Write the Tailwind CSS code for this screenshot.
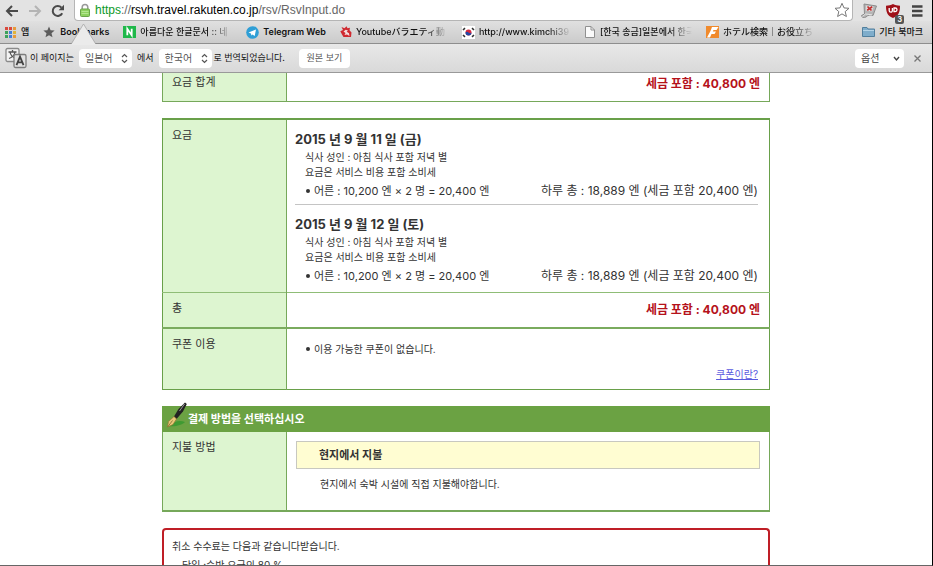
<!DOCTYPE html>
<html lang="ko">
<head>
<meta charset="utf-8">
<meta name="viewport" content="width=device-width, initial-scale=1">
<title>RsvInput</title>
<script src="https://cdn.jsdelivr.net/npm/@tailwindcss/browser@4"></script>
</head>
<body class="flex h-screen flex-col overflow-hidden border-r border-b border-r-black border-b-[#666] bg-white font-['Inter','Noto_Sans_CJK_KR',sans-serif] text-[#333]">

<header class="relative shrink-0">
  <!-- Address bar -->
  <div class="flex h-[21px] items-center bg-[#e3e3e3] pr-2 pl-[5px]">
    <button aria-label="뒤로" class="mr-[9px] shrink-0"><svg class="block" width="14" height="14" viewBox="0 0 14 14" fill="none" stroke="#4a4a4a" stroke-width="2"><path d="M13 7H2M7 2 2 7l5 5"/></svg></button>
    <button aria-label="앞으로" class="mr-[9px] shrink-0"><svg class="block" width="14" height="14" viewBox="0 0 14 14" fill="none" stroke="#b4b4b4" stroke-width="2"><path d="M1 7h11M7 2l5 5-5 5"/></svg></button>
    <button aria-label="새로고침" class="mr-[9px] shrink-0"><svg class="block" width="14" height="14" viewBox="0 0 14 14"><path d="M11.2 9.2A5 5 0 1 1 10.5 3.6" fill="none" stroke="#4a4a4a" stroke-width="2"/><path d="M13 .8v5.4H7.6z" fill="#4a4a4a"/></svg></button>
    <div class="flex h-[21px] min-w-0 flex-1 items-center rounded-b-sm border border-t-0 border-[#b5b5b5] bg-white px-1">
      <svg class="mr-1 shrink-0" width="12" height="14" viewBox="0 0 12 14"><path d="M3.200 7V4.200a2.800 2.800 0 0 1 5.600 0V7" fill="none" stroke="#999" stroke-width="1.500"/><rect x="1.500" y="6" width="9" height="7.500" rx="1" fill="#8ed25f" stroke="#6aa44a"/><path d="M2.500 8.500h7M2.500 10.500h7" stroke="#b4e691"/></svg>
      <div class="flex-1 truncate font-['Liberation_Sans',sans-serif] text-[12px] leading-5 text-[#666]"><span class="text-[#0b9a28]">https</span>://<span class="text-black">rsvh.travel.rakuten.co.jp</span>/rsv/RsvInput.do</div>
      <button aria-label="북마크 추가" class="-mr-[2px] shrink-0"><svg class="block" width="16" height="16" viewBox="0 0 16 16" fill="#fff" stroke="#777"><path d="m8 1.300 2 4.600 5 .4-3.800 3.300 1.200 4.900L8 11.900l-4.400 2.600 1.200-4.900L1 6.300l5-.4z"/></svg></button>
    </div>
    <button aria-label="스크립트 확장" class="ml-2 shrink-0"><svg class="block" width="16" height="18" viewBox="0 0 16 18"><path d="M3 2 15.500 4 12 13.500c-3-1-5-.5-7 1.500-2 1-4.500.5-4.500-1.500L3.500 12z" fill="#b5b5b5" stroke="#8c8c8c"/><path d="m1.500 14.500 3-2.500 6.500.8" stroke="#e5e5e5" fill="none"/><path d="m5 3.500 7.500 1-1.300 5-6.500-1z" fill="#ddd"/><path d="m6.500 4.500 4 4m.7-3.700-5 3.500" stroke="#c22d2d" stroke-width="1.700"/></svg></button>
    <button aria-label="차단 확장" class="relative ml-2 shrink-0"><svg class="block" width="18" height="20" viewBox="0 0 18 20"><path d="M8 3c2 1.300 4.500 1.700 7 1.700 0 6-1 9.800-7 12.300C2 14.500 1 10.700 1 4.700 3.500 4.700 6 4.300 8 3z" fill="#a01018"/><path d="M4.200 7v2.600a1.600 1.600 0 0 0 3.200 0V7M9 7v3.600h1.200a1.800 1.800 0 0 0 0-3.600z" fill="none" stroke="#fff" stroke-width="1.300"/></svg><span class="absolute -right-px bottom-[-3px] rounded-[2px] bg-[#555] px-[2px] text-[7px] leading-[9px] font-bold text-white">3</span></button>
    <button aria-label="메뉴" class="ml-[5px] shrink-0"><svg class="block" width="16" height="14" viewBox="0 0 16 14" stroke="#444" stroke-width="2.400"><path d="M4 2.500h10.500M4 7h10.500M4 11.500h10.500"/></svg></button>
  </div>

  <!-- Bookmarks bar -->
  <nav class="flex h-[23px] items-center gap-[14px] border-b border-[#8e8e8e] bg-linear-to-b from-[#e0e0e0] to-[#cbcbcb] pr-[9px] pl-[5px] text-[9px] font-medium whitespace-nowrap text-[#111]">
    <a href="#" class="flex items-center gap-[5px]"><svg width="11" height="11" viewBox="0 0 11 11"><path d="M0 0h3v3H0zM4 0h3v3H4z" fill="#d9493d"/><path d="M8 0h3v3H8zM8 8h3v3H8z" fill="#e89a3a"/><path d="M0 4h3v3H0zM0 8h3v3H0z" fill="#3da25c"/><path d="M4 4h3v3H4zM4 8h3v3H4z" fill="#4380d8"/><path d="M8 4h3v3H8z" fill="#e0b43b"/></svg>앱</a>
    <a href="#" class="flex items-center gap-[5px] font-semibold"><svg width="12" height="12" viewBox="0 0 12 12"><path d="m6 .5 1.600 3.800 4 .3-3.100 2.700 1 4L6 9.200l-3.500 2.100 1-4L.4 4.600l4-.3z" fill="#5c5c5c"/></svg>Bookmarks</a>
    <a href="#" class="flex items-center gap-1"><svg width="13" height="12" viewBox="0 0 13 12"><path d="M0 0h13v12H0z" fill="#1fb84a"/><path d="M4.300 9.200V2.800l4.400 6.400V2.800" fill="none" stroke="#fff" stroke-width="1.800"/></svg><span class="w-[92px] mask-r-from-75%">아름다운 한글문서 :: 네</span></a>
    <a href="#" class="flex items-center gap-1 font-semibold"><svg width="13" height="13" viewBox="0 0 13 13"><circle cx="6.500" cy="6.500" r="6.300" fill="#2f9fd6"/><path d="m2.500 6.500 7.500-3-1.300 6.500-2.200-1.600-1.100 1.100-.4-2z" fill="#fff"/></svg>Telegram Web</a>
    <a href="#" class="flex items-center gap-1"><svg width="12" height="12" viewBox="0 0 12 12"><path d="M.3 5.200 3 4 1.500 1l3 1.200L6.500.3l1 2 2.500-.5-.5 2.400 2 2.300-.5 4.500H3.500L2 8.500z" fill="#cf2a30"/><path d="m3.500 5.500 2.200-1.700 2.300.7-1.300 1.300 2.300 1.400.5 2.800-2.500-1.500-2.500.5 1-2z" fill="#f4dcdc"/></svg><span lang="ja" class="w-[92px] mask-r-from-75%">Youtubeバラエティ動</span></a>
    <a href="#" class="flex items-center gap-1"><svg width="13" height="13" viewBox="0 0 13 13"><path d="M0 0h13v13H0z" fill="#fff"/><circle cx="6.500" cy="6.500" r="3" fill="#d5283e"/><path d="M3.500 6.500c1-1 2-.8 3 0s2 1 3 0a3 3 0 0 1-6 0z" fill="#2348a5"/><path d="m1 4 2-1.800M10 2.200 12 4M1 9l2 1.800M10 10.800 12 9" stroke="#333" stroke-width="1.600"/></svg><span class="w-[92px] mask-r-from-75%">http://www.kimchi39</span></a>
    <a href="#" class="flex items-center gap-[5px]"><svg width="10" height="12" viewBox="0 0 10 12"><path d="M.5.5h5.500l3.500 3.500v7.500h-9z" fill="#fafafa" stroke="#909090"/><path d="M6 .5V4h3.500" fill="none" stroke="#909090"/></svg><span class="w-[92px] mask-r-from-75%">[한국 송금]일본에서 한국</span></a>
    <a href="#" class="flex items-center gap-1"><svg width="13" height="12" viewBox="0 0 13 12"><path d="M0 0h13v12H0z" fill="#f08a2c"/><path d="M1 11.500 4.500 5 6 1h6.500l-2 3H7.500L6.800 5.500H10L8.500 8H5.500L4 11.500z" fill="#fff"/></svg><span lang="ja" class="w-[92px] mask-r-from-75%">ホテル検索｜お役立ち</span></a>
    <a href="#" class="ml-auto flex items-center gap-1"><svg width="13" height="12" viewBox="0 0 13 12"><path d="M.5 10.500v-9h4.500l1 1.500h6.500v7.500z" fill="#7fadcb" stroke="#517f9d"/><path d="M1 4.500h11" stroke="#b4d3e6"/></svg>기타 북마크</a>
  </nav>

  <!-- Translate bar -->
  <div class="flex h-[29px] items-center border-b border-[#999] bg-linear-to-b from-[#e8e8e8] to-[#d9d9d9] pr-[11px] pl-[5px] text-[9px] whitespace-nowrap text-[#111]">
    <svg class="mr-[3px] shrink-0" width="22" height="22" viewBox="0 0 22 22"><rect x="1" y="1.500" width="13" height="13" rx="1.500" fill="#f3f3f3" stroke="#8a8a8a" stroke-width="1.300"/><path d="M3.500 5h8M7.500 3v2M5 5c.5 3 3 5.500 6 6.500M10 5c-.5 3-3 5.500-6 6.500" fill="none" stroke="#555" stroke-width="1.300"/><rect x="9" y="7.500" width="12" height="13" rx="1.500" fill="#e2e2e2" stroke="#7c7c7c" stroke-width="1.300"/><path d="m11.500 18.200 3.500-8.500 3.500 8.500M12.800 15.300h4.400" fill="none" stroke="#444" stroke-width="1.800"/></svg>
    <label for="from">이 페이지는</label>
    <span class="relative mx-[5px] flex">
      <select id="from" class="h-[19px] w-[53px] appearance-none rounded-sm bg-white pl-[6px] text-[10px] text-[#555]"><option>일본어</option></select>
      <svg class="pointer-events-none absolute top-1 right-1" width="7" height="11" viewBox="0 0 7 11" fill="none" stroke="#555" stroke-width="1.200"><path d="m1 4 2.500-2.500L6 4M1 7l2.500 2.500L6 7"/></svg>
    </span>
    <label for="to">에서</label>
    <span class="relative mr-[2px] ml-[5px] flex">
      <select id="to" class="h-[19px] w-[53px] appearance-none rounded-sm bg-white pl-[6px] text-[10px] text-[#555]"><option>한국어</option></select>
      <svg class="pointer-events-none absolute top-1 right-1" width="7" height="11" viewBox="0 0 7 11" fill="none" stroke="#555" stroke-width="1.200"><path d="m1 4 2.500-2.500L6 4M1 7l2.500 2.500L6 7"/></svg>
    </span>
    <span>로 번역되었습니다.</span>
    <button class="ml-[14px] h-[19px] w-[51px] rounded-sm bg-white text-[#555]">원본 보기</button>
    <span class="relative ml-auto flex">
      <select aria-label="옵션" class="h-[19px] w-[49px] appearance-none rounded-sm bg-white pl-[6px] text-[10px] text-[#444]"><option>옵션</option></select>
      <svg class="pointer-events-none absolute top-[7px] right-1" width="7" height="6" viewBox="0 0 7 6" fill="none" stroke="#444" stroke-width="1.400"><path d="m1 1 2.500 3L6 1"/></svg>
    </span>
    <button aria-label="닫기" class="ml-[10px]"><svg class="block" width="7" height="7" viewBox="0 0 7 7" stroke="#777" stroke-width="1.300"><path d="m.5.5 6 6m0-6-6 6"/></svg></button>
  </div>
  <!-- Pointer from the translate bar to the page icon -->
  <svg class="absolute top-[23px] left-[71px]" width="25" height="22" viewBox="0 0 25 22"><path d="M0 22 12.500 1 25 22z" fill="#ebebeb"/><path d="M.5 20.500 12.500 1l12 19.500" fill="none" stroke="#aaa" stroke-width=".8"/></svg>
</header>

<main class="min-h-0 flex-1 overflow-hidden px-4">
  <div class="mx-auto max-w-[608px]">

    <table class="w-full border-x border-b border-[#76a85a] text-left text-[11px]">
      <tr>
        <th class="h-7 w-[124px] border-r border-[#76a85a] bg-[#ddf5d0] px-[9px] align-top leading-[18px] font-normal">요금 합계</th>
        <td class="px-[9px] pt-[2px] text-right align-top text-[12px] leading-[18px] font-bold text-[#b5121b]">세금 포함 : 40,800 엔</td>
      </tr>
    </table>

    <table class="mt-4 w-full border-x border-t-2 border-b border-[#69a04a] text-left text-[11px]">
      <tr class="border-b border-[#8fbd76]">
        <th class="w-[124px] border-r border-[#76a85a] bg-[#ddf5d0] px-[9px] pt-[6px] align-top leading-[18px] font-normal">요금</th>
        <td class="px-2 pt-[10px] pb-[7px] align-top">
          <section class="mr-[3px] border-b border-[#c4c4c4] pb-1">
            <h3 class="text-[13px] leading-[18px] font-bold">2015 년 9 월 11 일 (금)</h3>
            <div class="pt-[2px] pl-[10px] text-[10px] leading-[15px]"><p>식사 성인 : 아침 식사 포함 저녁 별</p><p>요금은 서비스 비용 포함 소비세</p></div>
            <div class="flex justify-between pt-[2px] pl-[11px] leading-[18px]"><span class="flex items-center gap-1"><i class="size-1 rounded-full bg-[#333]"></i>어른 : 10,200 엔 × 2 명 = 20,400 엔</span><span class="text-[12px]">하루 총 : 18,889 엔 (세금 포함 20,400 엔)</span></div>
          </section>
          <section class="mr-[3px] pt-[10px]">
            <h3 class="text-[13px] leading-[18px] font-bold">2015 년 9 월 12 일 (토)</h3>
            <div class="pt-[2px] pl-[10px] text-[10px] leading-[15px]"><p>식사 성인 : 아침 식사 포함 저녁 별</p><p>요금은 서비스 비용 포함 소비세</p></div>
            <div class="flex justify-between pt-[2px] pl-[11px] leading-[18px]"><span class="flex items-center gap-1"><i class="size-1 rounded-full bg-[#333]"></i>어른 : 10,200 엔 × 2 명 = 20,400 엔</span><span class="text-[12px]">하루 총 : 18,889 엔 (세금 포함 20,400 엔)</span></div>
          </section>
        </td>
      </tr>
      <tr class="border-b-2 border-[#7aab5e]">
        <th class="h-9 border-r border-[#76a85a] bg-[#ddf5d0] px-[9px] pt-[6px] align-top leading-[18px] font-normal">총</th>
        <td class="px-[9px] pt-2 text-right align-top text-[12px] leading-[18px] font-bold text-[#b5121b]">세금 포함 : 40,800 엔</td>
      </tr>
      <tr>
        <th class="h-[61px] border-r border-[#76a85a] bg-[#ddf5d0] px-[9px] pt-[6px] align-top leading-[18px] font-normal">쿠폰 이용</th>
        <td class="pt-[11px] pr-[11px] pl-[19px] align-top text-[10px] leading-[18px]">
          <p class="flex items-center gap-1"><i class="size-1 rounded-full bg-[#333]"></i>이용 가능한 쿠폰이 없습니다.</p>
          <p class="pt-[7px] text-right"><a href="#" class="text-[#5a5ae0] underline">쿠폰이란?</a></p>
        </td>
      </tr>
    </table>

    <section class="mt-4">
      <h2 class="relative h-[26px] bg-[#6ba243] pl-[26px] text-[11px] leading-[26px] font-bold text-white">결제 방법을 선택하십시오
        <svg class="absolute top-[-5px] left-1" width="24" height="27" viewBox="0 0 24 27"><path d="M3 25c5-5 11-6 16-4-3 3-10 5-16 4z" fill="#3f9a32"/><path d="M19 1.500 20.800 3 17 10.500 10.500 18 8 15.500 12.500 8z" fill="#222"/><path d="m18.500 3-5 7" stroke="#999"/><path d="M8 15.500 10.500 18l-3.500 5.500L1.500 26l1-5.500z" fill="#e8c878" stroke="#8f6d2c" stroke-width=".6"/><path d="m2 25.500 4.500-6" stroke="#755723" stroke-width=".7"/></svg>
      </h2>
      <table class="w-full border-x border-b-2 border-[#76a85a] text-left text-[11px]">
        <tr>
          <th class="h-[79px] w-[124px] border-r border-[#76a85a] bg-[#ddf5d0] px-[9px] pt-[6px] align-top leading-[18px] font-normal">지불 방법</th>
          <td class="px-[9px] pt-[9px] align-top">
            <h3 class="border border-[#c8c8c0] bg-[#fffdd2] pl-[22px] leading-[26px] font-bold">현지에서 지불</h3>
            <p class="pt-[6px] pl-6 text-[10px] leading-[18px]">현지에서 숙박 시설에 직접 지불해야합니다.</p>
          </td>
        </tr>
      </table>
    </section>

    <section class="mt-4 rounded-t-sm border-2 border-b-0 border-[#bf1e26] px-2 pt-[7px] pb-6 text-[10px] leading-[19px]">
      <p>취소 수수료는 다음과 같습니다받습니다.</p>
      <p class="pl-[10px]">당일 :숙박 요금의 80 %</p>
    </section>
  </div>
</main>
</body>
</html>
